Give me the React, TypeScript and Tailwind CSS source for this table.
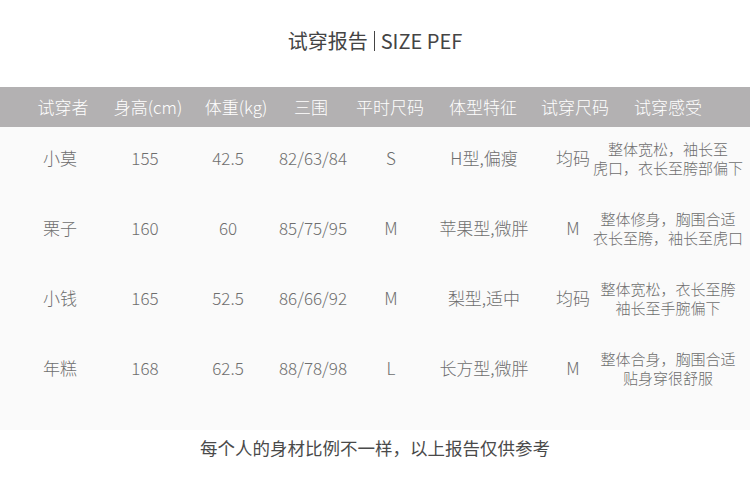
const rows = [
  { name: '小莫', h: '155', w: '42.5', b: '82/63/84', s: 'S', t: 'H型,偏瘦', ts: '均码', f: ['整体宽松，袖长至', '虎口，衣长至胯部偏下'] },
  { name: '栗子', h: '160', w: '60', b: '85/75/95', s: 'M', t: '苹果型,微胖', ts: 'M', f: ['整体修身，胸围合适', '衣长至胯，袖长至虎口'] },
  { name: '小钱', h: '165', w: '52.5', b: '86/66/92', s: 'M', t: '梨型,适中', ts: '均码', f: ['整体宽松，衣长至胯', '袖长至手腕偏下'] },
  { name: '年糕', h: '168', w: '62.5', b: '88/78/98', s: 'L', t: '长方型,微胖', ts: 'M', f: ['整体合身，胸围合适', '贴身穿很舒服'] },
];

const heads = ['试穿者', '身高(cm)', '体重(kg)', '三围', '平时尺码', '体型特征', '试穿尺码', '试穿感受'];

export default function App() {
  return (
    <div
      className="w-[750px] h-[479px] bg-white overflow-hidden"
      style={{ fontFamily: '"Noto Sans CJK SC", "Noto Sans", sans-serif' }}
    >
      {/* title */}
      <div className="h-[87px] flex items-center justify-center pb-[6px] text-[20px] text-[#444]">
        <span>试穿报告</span>
        <span className="mx-[6px] w-[1px] h-[20px] bg-[#444]" />
        <span>SIZE PEF</span>
      </div>

      {/* header */}
      <div className="h-[40px] bg-[#b3b1b2] pl-[20px] grid grid-cols-[86px_84px_92px_58px_100px_86px_98px_88px] items-center text-[17px] font-light text-white">
        {heads.map((h) => (
          <div key={h} className="flex justify-center whitespace-nowrap">{h}</div>
        ))}
      </div>

      {/* body */}
      <div className="bg-[#fafafa] pb-[23px] text-[#6e6e6e] font-light">
        {rows.map((r) => (
          <div
            key={r.name}
            className="h-[70px] pb-[8px] pl-[10px] grid grid-cols-[100px_70px_96px_74px_82px_104px_74px_116px] items-center text-[17px]"
          >
            <div className="flex justify-center">{r.name}</div>
            <div className="flex justify-center">{r.h}</div>
            <div className="flex justify-center">{r.w}</div>
            <div className="flex justify-center">{r.b}</div>
            <div className="flex justify-center">{r.s}</div>
            <div className="flex justify-center whitespace-nowrap">{r.t}</div>
            <div className="flex justify-center">{r.ts}</div>
            <div className="flex flex-col items-center text-[15px] leading-[19px] whitespace-nowrap">
              <span>{r.f[0]}</span>
              <span>{r.f[1]}</span>
            </div>
          </div>
        ))}
      </div>

      {/* footer */}
      <div className="h-[36px] flex items-center justify-center text-[17.5px] text-[#4a4a4a]">
        每个人的身材比例不一样，以上报告仅供参考
      </div>
    </div>
  );
}
